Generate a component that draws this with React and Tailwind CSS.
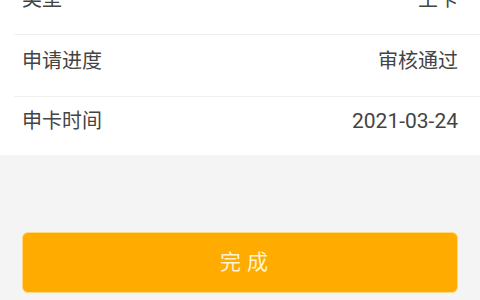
export default function App() {
  const rows = [
    ["类型", "主卡", "pt-[12px] pb-[21px] border-b border-[#f0f0f0]", "text-[20px]"],
    ["申请进度", "审核通过", "pt-[12px] pb-[21px] border-b border-[#f0f0f0]", "text-[20px]"],
    ["申卡时间", "2021-03-24", "pt-[10px] pb-[20px]", "text-[21px]"],
  ];
  return (
    <div
      className="w-[480px] h-[300px] overflow-hidden bg-[#f4f4f4]"
      style={{ fontFamily: 'Roboto, "Noto Sans CJK SC", "Noto Sans", sans-serif' }}
    >
      <div className="bg-white -mt-[27px]">
        {rows.map(([k, v, cls, vcls]) => (
          <div
            key={k}
            className={`ml-[14px] pl-[8px] pr-[22px] flex justify-between items-center text-[20px] leading-[28px] text-[#444444] ${cls}`}
          >
            <span>{k}</span>
            <span className={vcls}>{v}</span>
          </div>
        ))}
      </div>
      <div className="px-[22px] pt-[77px]">
        <button className="w-full h-[61px] rounded-[6px] bg-[#ffab00] border border-[#ffd980] text-[#fff3d4] text-[21px] tracking-[6px] pl-[14px] flex items-center justify-center">
          完成
        </button>
      </div>
    </div>
  );
}
